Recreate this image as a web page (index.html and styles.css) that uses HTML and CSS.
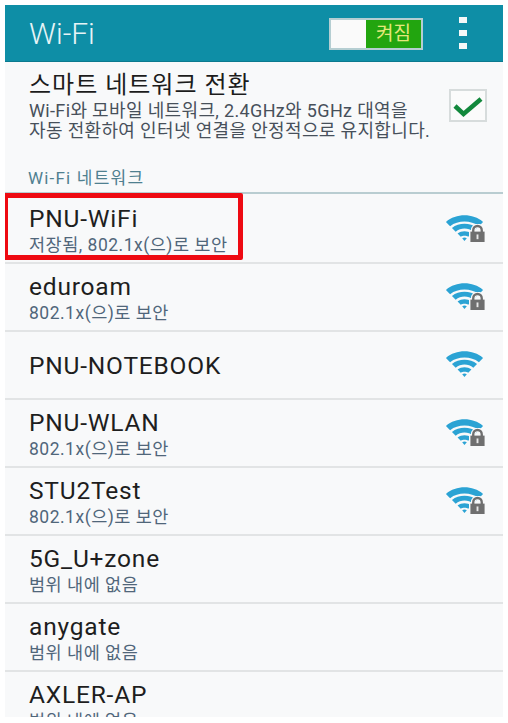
FILE: index.html
```html
<!DOCTYPE html>
<html lang="ko">
<head>
<meta charset="utf-8">
<title>Wi-Fi</title>
<link rel="stylesheet" href="styles.css">
</head>
<body>
<svg class="defs" width="0" height="0" aria-hidden="true">
  <symbol id="wifi" viewBox="0 0 40 28">
    <path d="M0 7.500C11 -2 29 -2 40 7.500L35.500 12C27 5.500 13 5.500 4.500 12Z"/>
    <path d="M6.500 14C14 8 26 8 33.500 14L29.500 18C24 13.500 16 13.500 10.500 18Z"/>
    <path d="M12.500 20C17 16.500 23 16.500 27.500 20L24 23.500C22 22 18 22 16 23.500Z"/>
    <path d="M17.500 25C19 24 21 24 22.500 25L20 28Z"/>
  </symbol>
  <symbol id="lock" viewBox="-1 -1 18 20">
    <path d="M3.500 8V5.500C3.500 2.800 5.500 1 8 1S12.500 2.800 12.500 5.500V8" fill="none" stroke="#f8f9fa" stroke-width="5"/>
    <rect x="-1" y="6" width="18" height="13" fill="#f8f9fa"/>
    <path d="M3.500 8V5.500C3.500 2.800 5.500 1 8 1S12.500 2.800 12.500 5.500V8" fill="none" stroke="#6f6f6f" stroke-width="2.500"/>
    <rect x="0.500" y="7" width="15" height="11" fill="#6f6f6f"/>
    <rect x="7" y="10" width="2" height="5" fill="#e8e8e8"/>
  </symbol>
</svg>
<main class="screen">
  <header class="appbar">
    <h1 class="appbar-title">Wi-Fi</h1>
    <div class="toggle"><span class="toggle-blank"></span><span class="toggle-on">켜짐</span></div>
    <div class="kebab"><i></i><i></i><i></i></div>
  </header>
  <section class="smart">
    <div class="smart-text">
      <div class="smart-title">스마트 네트워크 전환</div>
      <div class="smart-desc">Wi-Fi와 모바일 네트워크, 2.4GHz와 5GHz 대역을<br>자동 전환하여 인터넷 연결을 안정적으로 유지합니다.</div>
    </div>
    <div class="check">
      <svg width="32" height="24" viewBox="0 0 32 24"><path d="M3 12L11.500 20L29 5" fill="none" stroke="#12883c" stroke-width="4.500"/></svg>
    </div>
  </section>
  <div class="section-label">Wi-Fi 네트워크</div>
  <ul class="networks">
    <li class="net">
      <div class="net-text"><div class="net-name">PNU-WiFi</div><div class="net-sub">저장됨, 802.1x(으)로 보안</div></div>
      <span class="signal"><svg class="wifi"><use href="#wifi"/></svg><svg class="lock"><use href="#lock"/></svg></span>
      <div class="highlight"></div>
    </li>
    <li class="net">
      <div class="net-text"><div class="net-name">eduroam</div><div class="net-sub">802.1x(으)로 보안</div></div>
      <span class="signal"><svg class="wifi"><use href="#wifi"/></svg><svg class="lock"><use href="#lock"/></svg></span>
    </li>
    <li class="net">
      <div class="net-text"><div class="net-name">PNU-NOTEBOOK</div></div>
      <span class="signal"><svg class="wifi"><use href="#wifi"/></svg></span>
    </li>
    <li class="net">
      <div class="net-text"><div class="net-name">PNU-WLAN</div><div class="net-sub">802.1x(으)로 보안</div></div>
      <span class="signal"><svg class="wifi"><use href="#wifi"/></svg><svg class="lock"><use href="#lock"/></svg></span>
    </li>
    <li class="net">
      <div class="net-text"><div class="net-name">STU2Test</div><div class="net-sub">802.1x(으)로 보안</div></div>
      <span class="signal"><svg class="wifi"><use href="#wifi"/></svg><svg class="lock"><use href="#lock"/></svg></span>
    </li>
    <li class="net">
      <div class="net-text"><div class="net-name">5G_U+zone</div><div class="net-sub">범위 내에 없음</div></div>
    </li>
    <li class="net">
      <div class="net-text"><div class="net-name">anygate</div><div class="net-sub">범위 내에 없음</div></div>
    </li>
    <li class="net">
      <div class="net-text"><div class="net-name">AXLER-AP</div><div class="net-sub">범위 내에 없음</div></div>
    </li>
  </ul>
</main>
</body>
</html>
```
FILE: styles.css
```css
* { box-sizing: border-box; }
html, body { margin: 0; padding: 0; background: #fff; }
body { padding: 5px 5px 0; font-family: Roboto, "Noto Sans CJK KR", sans-serif; height: 723px; overflow: hidden; }
.defs { position: absolute; }
.screen { width: 498px; height: 712px; background: #f8f9fa; overflow: hidden; }

.appbar { height: 57px; background: #0e8ea6; border-bottom: 1px solid #0b7a8f; display: flex; align-items: center; padding: 0 0 0 24px; }
.appbar-title { margin: 0; flex: 1; font-weight: 300; font-size: 30px; color: #e6f4f6; }
.toggle { width: 94px; height: 32px; margin-top: 2px; display: flex; border: 2px solid #b5ced2; background: #fafafa; }
.toggle-blank { width: 35px; }
.toggle-on { flex: 1; background: #22a50f; color: #e4e87a; font-size: 19px; font-weight: 400; line-height: 27px; text-align: center; }
.kebab { width: 80px; display: flex; flex-direction: column; align-items: center; gap: 7px; }
.kebab i { width: 8px; height: 6px; background: #f4f8f8; }

.smart { height: 92px; display: flex; padding: 9px 16px 0 24px; justify-content: space-between; }
.smart-title { font-size: 24px; letter-spacing: 1px; line-height: 28px; color: #1c1c1c; font-weight: 400; }
.smart-desc { font-size: 18px; letter-spacing: 0.350px; line-height: 20px; color: #47505a; margin-top: 2px; white-space: nowrap; }
.check { width: 38px; height: 33px; margin-top: 18px; border: 2px solid #d7dcdc; background: #fbfbfb; display: flex; align-items: center; justify-content: center; }

.section-label { height: 40px; padding: 14px 0 0 23px; font-size: 17px; letter-spacing: 1.200px; line-height: 20px; color: #4f8090; border-bottom: 2px solid #b9cdd1; }

.networks { list-style: none; margin: 0; padding: 2px 0 0; }
.net { position: relative; height: 68px; display: flex; align-items: center; padding: 0 18px 0 24px; border-bottom: 2px solid #e2e4e5; }
.net-text { flex: 1; padding-top: 1px; }
.net-name { font-size: 24.500px; letter-spacing: 0.800px; line-height: 28px; color: #1e1e1e; }
.net-sub { font-size: 17.500px; letter-spacing: 0.500px; line-height: 20px; color: #50667a; margin-top: 2px; }
.signal { position: relative; width: 42px; height: 30px; margin-top: -6px; }
.wifi { position: absolute; left: 2px; top: 4px; width: 39px; height: 26px; fill: #2ba3d4; }
.lock { position: absolute; left: 26px; top: 13px; width: 17px; height: 19px; }
.highlight { position: absolute; left: -2px; top: -3px; width: 240px; height: 67px; border: 5px solid #ee0a12; border-radius: 2px; }
```
